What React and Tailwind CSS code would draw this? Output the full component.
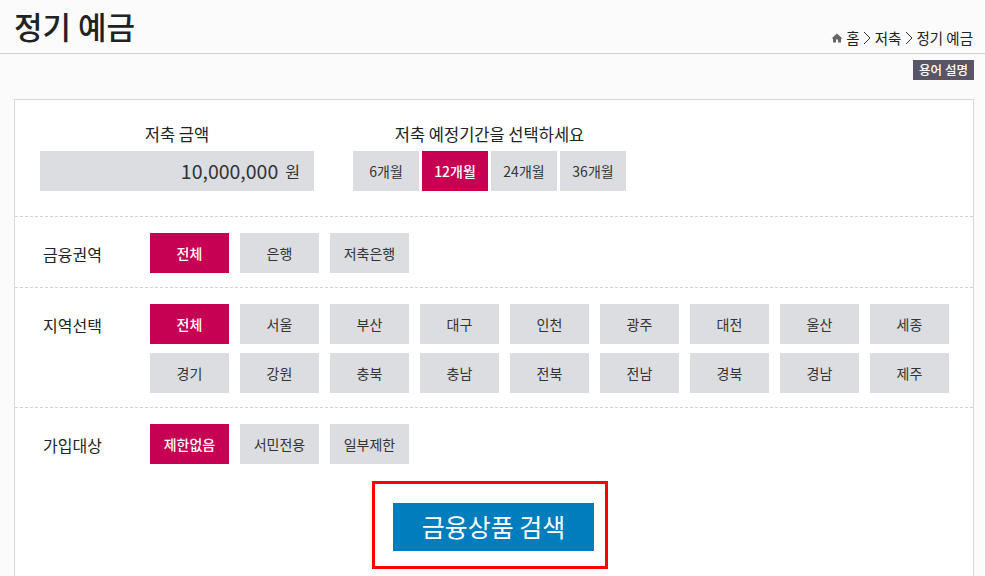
const regions = [
  ["전체", "서울", "부산", "대구", "인천", "광주", "대전", "울산", "세종"],
  ["경기", "강원", "충북", "충남", "전북", "전남", "경북", "경남", "제주"],
];

const OptionButton = ({ label, active, width = "w-[79px]" }) => (
  <div
    className={`${width} h-10 flex items-center justify-center text-sm ${
      active ? "bg-[#c60052] text-white font-medium" : "bg-[#dcdde1] text-[#333]"
    }`}
  >
    {label}
  </div>
);

const RowLabel = ({ children }) => (
  <div className="w-[108px] h-10 pl-[3px] pt-[2px] flex items-center text-base text-[#222]">{children}</div>
);

const Chevron = () => (
  <svg viewBox="0 0 8 14" className="w-[8px] h-[14px] mx-[3.5px] fill-none stroke-[#333] stroke-1">
    <path d="M1 1l6 6-6 6" />
  </svg>
);

export default function App() {
  return (
    <div className="h-[576px] overflow-hidden bg-[#fbfbfc] font-['Noto_Sans_CJK_KR','Noto_Sans',sans-serif] text-[#222]">
      <header className="h-[54px] border-b border-[#cfcfcf] flex justify-between items-end pl-[14px] pr-[12px]">
        <h1 className="h-[53px] pb-[7px] flex items-end text-[31px] leading-[40px] font-medium">정기 예금</h1>
        <div className="h-[20px] flex items-center text-[14.5px] leading-5 mb-[5px]">
          <svg viewBox="0 0 24 24" className="w-[12px] h-[12px] mr-[3px] fill-[#666]">
            <path d="M12 3 1 13h3v8h6v-6h4v6h6v-8h3z" />
          </svg>
          <span>홈</span>
          <Chevron />
          <span>저축</span>
          <Chevron />
          <span>정기 예금</span>
        </div>
      </header>

      <div className="h-[45px] pt-[6px] pr-[11px] flex justify-end items-start">
        <div className="w-[61px] h-5 bg-[#5a5566] text-white text-[12.5px] font-medium flex items-center justify-center">
          용어 설명
        </div>
      </div>

      <main className="mx-[14px] w-[960px] h-[600px] bg-white border border-[#d8d8d8]">
        <section className="h-[117px] pt-[23px] pl-[25px] flex gap-[39px] border-b border-dashed border-[#d4d4d4]">
          <div className="w-[274px]">
            <div className="h-[28px] text-[16.5px] leading-[22px] text-center">저축 금액</div>
            <div className="h-10 bg-[#dcdde1] flex items-center justify-end pr-[14px] gap-[7px] text-[#333]">
              <span className="text-[19.5px]">10,000,000</span>
              <span className="text-base">원</span>
            </div>
          </div>
          <div className="w-[273px]">
            <div className="h-[28px] text-[16.5px] leading-[22px] text-center">저축 예정기간을 선택하세요</div>
            <div className="flex gap-[3px]">
              <OptionButton label="6개월" width="w-[66px]" />
              <OptionButton label="12개월" width="w-[66px]" active />
              <OptionButton label="24개월" width="w-[66px]" />
              <OptionButton label="36개월" width="w-[66px]" />
            </div>
          </div>
        </section>

        <section className="h-[71px] pt-4 pl-[25px] flex border-b border-dashed border-[#d4d4d4]">
          <RowLabel>금융권역</RowLabel>
          <div className="ml-[2px] flex gap-[11px]">
            <OptionButton label="전체" active />
            <OptionButton label="은행" />
            <OptionButton label="저축은행" />
          </div>
        </section>

        <section className="h-[120px] pt-4 pl-[25px] flex border-b border-dashed border-[#d4d4d4]">
          <RowLabel>지역선택</RowLabel>
          <div className="ml-[2px] flex flex-col gap-[9px]">
            {regions.map((row, i) => (
              <div key={i} className="flex gap-[11px]">
                {row.map((name) => (
                  <OptionButton key={name} label={name} active={name === "전체"} />
                ))}
              </div>
            ))}
          </div>
        </section>

        <section className="pt-4 pl-[25px] flex">
          <RowLabel>가입대상</RowLabel>
          <div className="ml-[2px] flex gap-[11px]">
            <OptionButton label="제한없음" active />
            <OptionButton label="서민전용" />
            <OptionButton label="일부제한" />
          </div>
        </section>

        <div className="mt-[17px] flex justify-center pr-[8px]">
          <div className="w-[236px] h-[88px] border-[3px] border-[#ff0000] pl-[18px] pt-[19px]">
            <div className="w-[201px] h-12 bg-[#007dbc] text-white text-[25px] flex items-center justify-center">
              금융상품 검색
            </div>
          </div>
        </div>
      </main>
    </div>
  );
}
